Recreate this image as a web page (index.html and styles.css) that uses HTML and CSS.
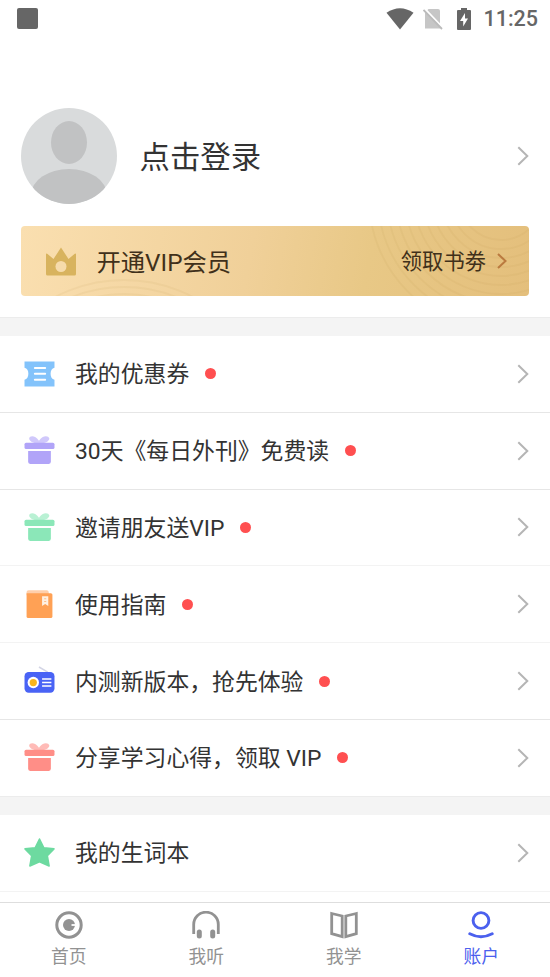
FILE: index.html
```html
<!DOCTYPE html>
<html lang="zh-CN">
<head>
<meta charset="utf-8">
<title>账户</title>
<link rel="stylesheet" href="styles.css">
</head>
<body>
<svg width="0" height="0" class="defs">
  <symbol id="gift" viewBox="0 0 30 30">
    <path d="M14.5 8C10 8.5 5 6 5 3.300C5.500 .3 11 .2 14.500 5.500C18 .2 23.500 .3 24.500 3.300C24.500 6 20 8.500 14.500 8Z" opacity=".6"/>
    <rect x=".5" y="7.500" width="29" height="6" rx="1.500"/>
    <path d="M4 15.500H26V26Q26 28 24 28H6Q4 28 4 26Z"/>
  </symbol>
  <symbol id="chevron" viewBox="0 0 12 20">
    <path d="M1.300 1.200L10.300 10L1.300 18.800" fill="none" stroke="currentColor" stroke-width="2"/>
  </symbol>
</svg>
<div class="app">
  <header class="status">
    <span class="notice"></span>
    <div class="indicators">
      <svg class="wifi" width="28" height="22" viewBox="0 0 28 22"><path d="M.5 4.800Q14-4.200 27.500 4.800L14 21.500Z" fill="#666"/></svg>
      <svg class="sim" width="20" height="22" viewBox="0 0 20 22"><path d="M5.500 1H15Q17 1 17 3V20.500H2V4.500Z" fill="#c6c6c6"/><path d="M1.500 .5L20 20" stroke="#fff" stroke-width="2"/><path d="M.5 2L19 21" stroke="#bbb" stroke-width="1.800"/></svg>
      <svg class="battery" width="14" height="22" viewBox="0 0 14 22"><path d="M4 0H10V2H13Q14 2 14 3V21Q14 22 13 22H1Q0 22 0 21V3Q0 2 1 2H4Z" fill="#666"/><path d="M8 5L3 13H6.200V18.500L11 10.500H8Z" fill="#fff"/></svg>
      <span class="clock">11:25</span>
    </div>
  </header>
  <main>
    <section class="profile">
      <svg class="avatar" width="96" height="96" viewBox="0 0 96 96"><defs><clipPath id="face"><circle cx="48" cy="48" r="48"/></clipPath></defs><g clip-path="url(#face)"><rect width="96" height="96" fill="#d9dbdc"/><ellipse cx="48" cy="34.500" rx="18" ry="21.500" fill="#c1c2c3"/><ellipse cx="48" cy="87" rx="38" ry="26" fill="#c1c2c3"/></g></svg>
      <span class="login">点击登录</span>
      <svg class="chevron"><use href="#chevron"/></svg>
    </section>
    <section class="vip">
      <svg class="rings" width="508" height="70" viewBox="0 0 508 70"><g fill="none" stroke="#b88a45" stroke-opacity=".08" stroke-width="1.800"><circle cx="103" cy="202" r="148"/><circle cx="103" cy="202" r="141"/><circle cx="103" cy="202" r="134"/><circle cx="480" cy="-28" r="132"/><circle cx="480" cy="-28" r="123"/><circle cx="480" cy="-28" r="114"/><circle cx="480" cy="-28" r="105"/><circle cx="480" cy="-28" r="96"/><circle cx="480" cy="-28" r="87"/><circle cx="480" cy="-28" r="78"/><circle cx="480" cy="-28" r="69"/><circle cx="480" cy="-28" r="60"/><circle cx="480" cy="-28" r="51"/><circle cx="480" cy="-28" r="42"/></g></svg>
      <svg class="crown" width="30" height="29" viewBox="0 0 30 29"><path d="M0 7.500Q0 6 1.200 6.700L7.500 12L15 .5L22.500 12L28.800 6.700Q30 6 30 7.500V27Q30 28.500 28.500 28.500H1.500Q0 28.500 0 27Z" fill="#d8b35e"/><circle cx="15" cy="19.500" r="5.500" fill="#f6dbab"/></svg>
      <span class="vip-title">开通VIP会员</span>
      <span class="coupon">领取书劵</span>
      <svg class="vip-arrow" width="10" height="16" viewBox="0 0 10 16"><path d="M1 1L8.500 8L1 15" fill="none" stroke="#ba7a3f" stroke-width="2"/></svg>
    </section>
    <ul class="list">
      <li><svg class="icon" viewBox="0 0 30 30"><path d="M.5 3.500H29.500V9.500C24.500 10 24.500 20.500 29.500 21V27.500H.5V21C5.500 20.500 5.500 10 .5 9.500Z" fill="#83c3fb"/><path d="M10.500 9.600H20.500M10.500 15.300H20.500M10.500 21H20.500" stroke="#fff" stroke-width="1.900" stroke-linecap="round"/></svg><span>我的优惠券</span><i></i><svg class="chevron"><use href="#chevron"/></svg></li>
      <li><svg class="icon violet"><use href="#gift"/></svg><span>30天《每日外刊》免费读</span><i></i><svg class="chevron"><use href="#chevron"/></svg></li>
      <li class="faint"><svg class="icon mint"><use href="#gift"/></svg><span>邀请朋友送VIP</span><i></i><svg class="chevron"><use href="#chevron"/></svg></li>
      <li class="faint"><svg class="icon" viewBox="0 0 30 30"><path d="M2.500 5V3Q2.500 1.300 4.500 1.300H22Q24 1.300 24 4V6H2.500Z" fill="#ffcfab"/><path d="M2.500 4H26Q27.500 4 27.500 5.500V26.500Q27.500 28 26 28H4Q2.500 28 2.500 26.500Z" fill="#ffa155"/><path d="M17.500 7H23.500V16.500L20.500 14.500L17.500 16.500Z" fill="#fff0e2"/><path d="M19.500 9.500H21.500M19.500 12H21.500" stroke="#ffbd88" stroke-width="1"/></svg><span>使用指南</span><i></i><svg class="chevron"><use href="#chevron"/></svg></li>
      <li><svg class="icon" viewBox="0 0 30 30"><path d="M14.500 1L23 6" stroke="#d3d5e5" stroke-width="1.500"/><rect x=".5" y="5.800" width="29" height="20" rx="4" fill="#4963f5"/><circle cx="9" cy="16" r="5.500" fill="#fff"/><circle cx="9" cy="16" r="3.500" fill="#f9b51b"/><path d="M17.500 12.500H26.500M17.500 16H26.500M17.500 19.300H26.500" stroke="#fff" stroke-width="1.500"/></svg><span>内测新版本，抢先体验</span><i></i><svg class="chevron"><use href="#chevron"/></svg></li>
      <li><svg class="icon coral"><use href="#gift"/></svg><span>分享学习心得，领取 VIP</span><i></i><svg class="chevron"><use href="#chevron"/></svg></li>
    </ul>
    <ul class="list words">
      <li class="faint"><svg class="icon" viewBox="0 0 30 30"><path d="M15 2L19.200 10.500L29 11.500L22.600 18.200L24.300 28L15 24L5.700 28L7.400 18.200L1 11.500L10.800 10.500Z" fill="#6ddaa0" stroke="#6ddaa0" stroke-width="1.500" stroke-linejoin="round"/></svg><span>我的生词本</span><svg class="chevron"><use href="#chevron"/></svg></li>
    </ul>
  </main>
  <nav>
    <a><svg width="28" height="28" viewBox="0 0 28 28"><circle cx="14" cy="14" r="12.200" fill="none" stroke="#929292" stroke-width="3"/><circle cx="14" cy="14" r="6" fill="#929292"/><path d="M16.500 14H20.500" stroke="#fff" stroke-width="1.800"/></svg>首页</a>
    <a><svg width="28" height="28" viewBox="0 0 28 28"><path d="M1.700 23V13.500A12.300 12.300 0 0 1 26.300 13.500V23" fill="none" stroke="#929292" stroke-width="2.800"/><rect x="4.800" y="18.500" width="5" height="9" rx="2.500" fill="#929292"/><rect x="18.200" y="18.500" width="5" height="9" rx="2.500" fill="#929292"/></svg>我听</a>
    <a><svg width="28" height="28" viewBox="0 0 28 28"><path d="M1.700 2.500L12.200 5V25.700L1.700 22.700ZM26.300 2.500L15.800 5V25.700L26.300 22.700Z" fill="none" stroke="#929292" stroke-width="2.800"/></svg>我学</a>
    <a class="active"><svg width="28" height="28" viewBox="0 0 28 28"><g fill="none" stroke="#4b60ee" stroke-width="2.900"><circle cx="14" cy="9.500" r="7.900"/><path d="M2.800 22.800Q14 28.800 25.200 22.800" stroke-linecap="round"/></g></svg>账户</a>
  </nav>
</div>
</body>
</html>
```
FILE: styles.css
```css
* { box-sizing: border-box; }
body { margin: 0; background: #fff; color: #333; font-family: Roboto, "Noto Sans CJK SC", sans-serif; }
.defs { display: block; }
svg { flex: none; }
.app { display: flex; flex-direction: column; height: 977px; overflow: hidden; }
.status { display: flex; flex: none; justify-content: space-between; align-items: center; height: 37px; padding: 0 12px 0 17px; }
.notice { width: 21px; height: 21px; border-radius: 2px; background: #666; }
.indicators { display: flex; align-items: center; }
.sim { margin-left: 9px; }
.battery { margin-left: 14px; }
.clock { margin-left: 12px; color: #666; font-size: 21.500px; font-weight: 500; line-height: 34px; padding-top: 1px; }
main { flex: 1; min-height: 0; overflow: hidden; padding-top: 71px; }
.profile { display: flex; align-items: center; height: 96px; padding: 0 21px; }
.login { margin-left: 22.500px; padding-top: 3px; font-size: 30.400px; line-height: 44px; }
.chevron { width: 12px; height: 20px; margin-left: auto; color: #b5b5b5; }
.vip { position: relative; display: flex; align-items: center; height: 70px; margin: 22px 21px; padding: 0 22px 0 25px; border-radius: 4px; overflow: hidden; background: linear-gradient(100deg, #fadfb0, #f0d099 45%, #e8c886 68%, #e4bf7c); }
.rings { position: absolute; inset: 0; }
.crown, .vip-title, .coupon, .vip-arrow { position: relative; }
.vip-title { margin-left: 20.500px; padding-top: 3px; color: #40301a; font-size: 24.300px; line-height: 36px; }
.coupon { margin-left: auto; padding-top: 2px; color: #40301a; font-size: 21.300px; line-height: 32px; }
.vip-arrow { margin-left: 11px; }
.list { margin: 0; padding: 0; list-style: none; border-top: 18px solid #f4f4f4; box-shadow: 0 -1px #ececec; }
.list li { display: flex; align-items: center; height: 76.800px; padding: 0 21px 0 24px; border-bottom: 1px solid #e6e6e6; }
.list .faint { border-bottom-color: #f3f3f3; }
.icon { width: 31px; height: 31px; }
.list span { margin-left: 20px; padding-top: 3px; font-size: 22.850px; line-height: 34px; white-space: pre; }
.list i { width: 11px; height: 11px; margin-left: 16px; border-radius: 50%; background: #ff4f50; }
.violet { fill: #b1a4f8; }
.mint { fill: #8be7b8; }
.coral { fill: #ff8e87; }
nav { display: flex; flex: none; height: 75px; padding-top: 8px; border-top: 1px solid #dedede; background: #fff; }
nav a { display: flex; flex: 1; flex-direction: column; align-items: center; color: #929292; font-size: 17.800px; line-height: 26px; gap: 5px; }
nav .active { color: #4b60ee; }
```
